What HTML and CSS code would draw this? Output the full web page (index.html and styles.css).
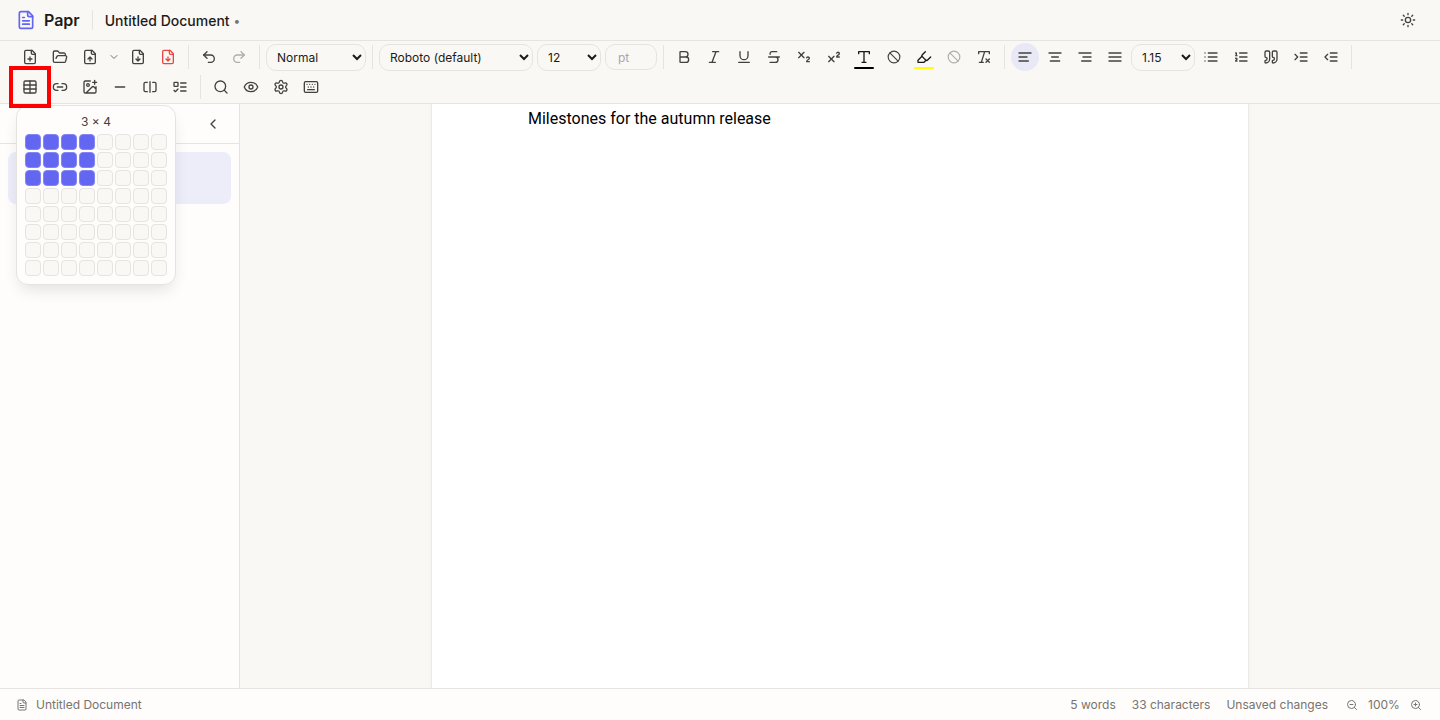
FILE: index.html
```html
<!DOCTYPE html>
<html lang="en">
<head>
<meta charset="utf-8">
<title>Papr</title>
<link rel="stylesheet" href="styles.css">
</head>
<body>
<svg class="sprite" aria-hidden="true">
  <symbol id="file-text" viewBox="0 0 24 24"><path d="M15 2H6a2 2 0 0 0-2 2v16a2 2 0 0 0 2 2h12a2 2 0 0 0 2-2V7Z"/><path d="M14 2v4a2 2 0 0 0 2 2h4M10 9H8M16 13H8M16 17H8"/></symbol>
  <symbol id="file-plus" viewBox="0 0 24 24"><path d="M15 2H6a2 2 0 0 0-2 2v16a2 2 0 0 0 2 2h12a2 2 0 0 0 2-2V7Z"/><path d="M14 2v4a2 2 0 0 0 2 2h4M9 15h6M12 18v-6"/></symbol>
  <symbol id="file-up" viewBox="0 0 24 24"><path d="M15 2H6a2 2 0 0 0-2 2v16a2 2 0 0 0 2 2h12a2 2 0 0 0 2-2V7Z"/><path d="M14 2v4a2 2 0 0 0 2 2h4M12 12v6M15 15l-3-3-3 3"/></symbol>
  <symbol id="file-down" viewBox="0 0 24 24"><path d="M15 2H6a2 2 0 0 0-2 2v16a2 2 0 0 0 2 2h12a2 2 0 0 0 2-2V7Z"/><path d="M14 2v4a2 2 0 0 0 2 2h4M12 18v-6M9 15l3 3 3-3"/></symbol>
  <symbol id="folder-open" viewBox="0 0 24 24"><path d="m6 14 1.5-2.9A2 2 0 0 1 9.24 10H20a2 2 0 0 1 1.94 2.5l-1.54 6a2 2 0 0 1-1.95 1.5H4a2 2 0 0 1-2-2V5a2 2 0 0 1 2-2h3.9a2 2 0 0 1 1.69.9l.81 1.2a2 2 0 0 0 1.67.9H18a2 2 0 0 1 2 2v2"/></symbol>
  <symbol id="chevron-down" viewBox="0 0 24 24"><path d="m6 9 6 6 6-6"/></symbol>
  <symbol id="chevron-left" viewBox="0 0 24 24"><path d="m15 18-6-6 6-6"/></symbol>
  <symbol id="undo" viewBox="0 0 24 24"><path d="M9 14 4 9l5-5"/><path d="M4 9h10.5a5.5 5.5 0 0 1 0 11H11"/></symbol>
  <symbol id="redo" viewBox="0 0 24 24"><path d="m15 14 5-5-5-5"/><path d="M20 9H9.5a5.5 5.5 0 0 0 0 11H13"/></symbol>
  <symbol id="bold" viewBox="0 0 24 24"><path d="M6 12h9a4 4 0 0 1 0 8H7a1 1 0 0 1-1-1V5a1 1 0 0 1 1-1h7a4 4 0 0 1 0 8"/></symbol>
  <symbol id="italic" viewBox="0 0 24 24"><path d="M19 4h-9M14 20H5M15 4 9 20"/></symbol>
  <symbol id="underline" viewBox="0 0 24 24"><path d="M6 4v6a6 6 0 0 0 12 0V4M4 20h16"/></symbol>
  <symbol id="strike" viewBox="0 0 24 24"><path d="M16 4H9a3 3 0 0 0-2.83 4M14 12a4 4 0 0 1 0 8H6M4 12h16"/></symbol>
  <symbol id="subscript" viewBox="0 0 24 24"><path d="m4 5 8 8M12 5l-8 8M20 19h-4c0-1.5.44-2 1.5-2.5S20 15.33 20 14c0-.47-.17-.93-.48-1.29a2.11 2.11 0 0 0-2.62-.44c-.42.24-.74.62-.9 1.07"/></symbol>
  <symbol id="superscript" viewBox="0 0 24 24"><path d="m4 19 8-8M12 19l-8-8M20 12h-4c0-1.5.44-2 1.5-2.5S20 8.33 20 7c0-.47-.17-.93-.48-1.29a2.11 2.11 0 0 0-2.62-.44c-.42.24-.74.62-.9 1.07"/></symbol>
  <symbol id="type" viewBox="0 0 24 24"><path d="M4 7V4h16v3M9 20h6M12 4v16"/></symbol>
  <symbol id="ban" viewBox="0 0 24 24"><circle cx="12" cy="12" r="10"/><path d="m4.9 4.9 14.2 14.2"/></symbol>
  <symbol id="highlighter" viewBox="0 0 24 24"><path d="m9 11-6 6v3h9l3-3"/><path d="m22 12-4.6 4.6a2 2 0 0 1-2.8 0l-5.2-5.2a2 2 0 0 1 0-2.8L14 4"/></symbol>
  <symbol id="clear" viewBox="0 0 24 24"><path d="M4 7V4h16v3M5 20h6M13 4 8 20M15 15l5 5M20 15l-5 5"/></symbol>
  <symbol id="align-left" viewBox="0 0 24 24"><path d="M21 6H3M15 12H3M17 18H3"/></symbol>
  <symbol id="align-center" viewBox="0 0 24 24"><path d="M21 6H3M17 12H7M19 18H5"/></symbol>
  <symbol id="align-right" viewBox="0 0 24 24"><path d="M21 6H3M21 12H9M21 18H7"/></symbol>
  <symbol id="align-justify" viewBox="0 0 24 24"><path d="M3 6h18M3 12h18M3 18h18"/></symbol>
  <symbol id="list" viewBox="0 0 24 24"><path d="M3 6h.01M3 12h.01M3 18h.01M8 6h13M8 12h13M8 18h13"/></symbol>
  <symbol id="list-ordered" viewBox="0 0 24 24"><path d="M10 6h11M10 12h11M10 18h11M4 6h1v4M4 10h2M6 18H4c0-1 2-2 2-3s-1-1.500-2-1"/></symbol>
  <symbol id="quote" viewBox="0 0 24 24"><path d="M16 3a2 2 0 0 0-2 2v6a2 2 0 0 0 2 2 1 1 0 0 1 1 1v1a2 2 0 0 1-2 2 1 1 0 0 0-1 1v2a1 1 0 0 0 1 1 6 6 0 0 0 6-6V5a2 2 0 0 0-2-2z"/><path d="M5 3a2 2 0 0 0-2 2v6a2 2 0 0 0 2 2 1 1 0 0 1 1 1v1a2 2 0 0 1-2 2 1 1 0 0 0-1 1v2a1 1 0 0 0 1 1 6 6 0 0 0 6-6V5a2 2 0 0 0-2-2z"/></symbol>
  <symbol id="indent" viewBox="0 0 24 24"><path d="m3 8 4 4-4 4M21 6H11M21 12H11M21 18H11"/></symbol>
  <symbol id="outdent" viewBox="0 0 24 24"><path d="m7 8-4 4 4 4M21 6H11M21 12H11M21 18H11"/></symbol>
  <symbol id="table" viewBox="0 0 24 24"><rect x="3" y="3" width="18" height="18" rx="2"/><path d="M12 3v18M3 9h18M3 15h18"/></symbol>
  <symbol id="link" viewBox="0 0 24 24"><path d="M9 17H7A5 5 0 0 1 7 7h2M15 7h2a5 5 0 1 1 0 10h-2M8 12h8"/></symbol>
  <symbol id="image-plus" viewBox="0 0 24 24"><path d="M16 5h6M19 2v6M21 11.500V19a2 2 0 0 1-2 2H5a2 2 0 0 1-2-2V5a2 2 0 0 1 2-2h7.500M21 15l-3.090-3.090a2 2 0 0 0-2.820 0L6 21"/><circle cx="9" cy="9" r="2"/></symbol>
  <symbol id="minus" viewBox="0 0 24 24"><path d="M5 12h14"/></symbol>
  <symbol id="split" viewBox="0 0 24 24"><path d="M8 19H5c-1 0-2-1-2-2V7c0-1 1-2 2-2h3M16 5h3c1 0 2 1 2 2v10c0 1-1 2-2 2h-3M12 4v16"/></symbol>
  <symbol id="list-todo" viewBox="0 0 24 24"><rect x="3" y="5" width="6" height="6" rx="1"/><path d="m3 17 2 2 4-4M13 6h8M13 12h8M13 18h8"/></symbol>
  <symbol id="search" viewBox="0 0 24 24"><circle cx="11" cy="11" r="8"/><path d="m21 21-4.300-4.300"/></symbol>
  <symbol id="eye" viewBox="0 0 24 24"><path d="M2.062 12.348a1 1 0 0 1 0-.696 10.750 10.750 0 0 1 19.876 0 1 1 0 0 1 0 .696 10.750 10.750 0 0 1-19.876 0"/><circle cx="12" cy="12" r="3"/></symbol>
  <symbol id="settings" viewBox="0 0 24 24"><path d="M9.671 4.136a2.340 2.340 0 0 1 4.659 0 2.340 2.340 0 0 0 3.319 1.915 2.340 2.340 0 0 1 2.330 4.033 2.340 2.340 0 0 0 0 3.831 2.340 2.340 0 0 1-2.330 4.033 2.340 2.340 0 0 0-3.319 1.915 2.340 2.340 0 0 1-4.659 0 2.340 2.340 0 0 0-3.320-1.915 2.340 2.340 0 0 1-2.330-4.033 2.340 2.340 0 0 0 0-3.831A2.340 2.340 0 0 1 6.350 6.051a2.340 2.340 0 0 0 3.319-1.915"/><circle cx="12" cy="12" r="3"/></symbol>
  <symbol id="keyboard" viewBox="0 0 24 24"><rect x="2" y="4" width="20" height="16" rx="2"/><path d="M6 8h.01M10 8h.01M14 8h.01M18 8h.01M8 12h.01M12 12h.01M16 12h.01M7 16h10"/></symbol>
  <symbol id="sun" viewBox="0 0 24 24"><circle cx="12" cy="12" r="4"/><path d="M12 2v2M12 20v2M4.930 4.930l1.410 1.410M17.660 17.660l1.410 1.410M2 12h2M20 12h2M6.340 17.660l-1.410 1.410M19.070 4.930l-1.410 1.410"/></symbol>
  <symbol id="zoom-out" viewBox="0 0 24 24"><circle cx="11" cy="11" r="8"/><path d="m21 21-4.350-4.350M8 11h6"/></symbol>
  <symbol id="zoom-in" viewBox="0 0 24 24"><circle cx="11" cy="11" r="8"/><path d="m21 21-4.350-4.350M11 8v6M8 11h6"/></symbol>
</svg>

<div class="app">
  <header class="titlebar">
    <svg class="icon logo"><use href="#file-text"/></svg>
    <span class="brand">Papr</span>
    <span class="title-divider"></span>
    <span class="doc-title">Untitled Document</span>
    <span class="dirty">•</span>
    <button class="tool theme" aria-label="Toggle theme"><svg class="icon"><use href="#sun"/></svg></button>
  </header>

  <div class="toolbar" role="toolbar">
    <button class="tool" aria-label="New"><svg class="icon"><use href="#file-plus"/></svg></button>
    <button class="tool" aria-label="Open"><svg class="icon"><use href="#folder-open"/></svg></button>
    <button class="tool" aria-label="Import"><svg class="icon"><use href="#file-up"/></svg></button>
    <button class="tool tool-narrow" aria-label="Import options"><svg class="icon icon-xs"><use href="#chevron-down"/></svg></button>
    <button class="tool" aria-label="Save"><svg class="icon"><use href="#file-down"/></svg></button>
    <button class="tool tool-pdf" aria-label="Export PDF"><svg class="icon"><use href="#file-down"/></svg></button>
    <span class="divider"></span>
    <button class="tool" aria-label="Undo"><svg class="icon"><use href="#undo"/></svg></button>
    <button class="tool" aria-label="Redo" disabled><svg class="icon"><use href="#redo"/></svg></button>
    <span class="divider"></span>
    <select class="field field-style" aria-label="Paragraph style"><option>Normal</option></select>
    <span class="divider"></span>
    <div class="fonts">
      <select class="field field-font" aria-label="Font"><option>Roboto (default)</option></select>
      <select class="field field-number" aria-label="Font size"><option>12</option></select>
      <input class="field field-pt" aria-label="Custom size" placeholder="pt">
    </div>
    <span class="divider"></span>
    <button class="tool" aria-label="Bold"><svg class="icon"><use href="#bold"/></svg></button>
    <button class="tool" aria-label="Italic"><svg class="icon"><use href="#italic"/></svg></button>
    <button class="tool" aria-label="Underline"><svg class="icon"><use href="#underline"/></svg></button>
    <button class="tool" aria-label="Strikethrough"><svg class="icon"><use href="#strike"/></svg></button>
    <button class="tool" aria-label="Subscript"><svg class="icon"><use href="#subscript"/></svg></button>
    <button class="tool" aria-label="Superscript"><svg class="icon"><use href="#superscript"/></svg></button>
    <button class="tool swatch swatch-text" aria-label="Text color"><svg class="icon"><use href="#type"/></svg></button>
    <button class="tool" aria-label="Remove color"><svg class="icon icon-sm"><use href="#ban"/></svg></button>
    <button class="tool swatch swatch-mark" aria-label="Highlight"><svg class="icon"><use href="#highlighter"/></svg></button>
    <button class="tool" aria-label="Remove highlight" disabled><svg class="icon icon-sm"><use href="#ban"/></svg></button>
    <button class="tool" aria-label="Clear formatting"><svg class="icon"><use href="#clear"/></svg></button>
    <span class="divider"></span>
    <button class="tool active" aria-label="Align left"><svg class="icon"><use href="#align-left"/></svg></button>
    <button class="tool" aria-label="Align center"><svg class="icon"><use href="#align-center"/></svg></button>
    <button class="tool" aria-label="Align right"><svg class="icon"><use href="#align-right"/></svg></button>
    <button class="tool" aria-label="Justify"><svg class="icon"><use href="#align-justify"/></svg></button>
    <select class="field field-number" aria-label="Line spacing"><option>1.15</option></select>
    <button class="tool" aria-label="Bullet list"><svg class="icon"><use href="#list"/></svg></button>
    <button class="tool" aria-label="Numbered list"><svg class="icon"><use href="#list-ordered"/></svg></button>
    <button class="tool" aria-label="Quote"><svg class="icon"><use href="#quote"/></svg></button>
    <button class="tool" aria-label="Indent"><svg class="icon"><use href="#indent"/></svg></button>
    <button class="tool" aria-label="Outdent"><svg class="icon"><use href="#outdent"/></svg></button>
    <span class="divider"></span>
    <div class="tool-group">
      <div class="table-tool">
        <button class="tool" aria-label="Insert table" aria-expanded="true"><svg class="icon"><use href="#table"/></svg></button>
        <div class="table-menu">
          <div class="table-size">3 × 4</div>
          <div class="table-grid">
            <i class="on"></i><i class="on"></i><i class="on"></i><i class="on"></i><i></i><i></i><i></i><i></i>
            <i class="on"></i><i class="on"></i><i class="on"></i><i class="on"></i><i></i><i></i><i></i><i></i>
            <i class="on"></i><i class="on"></i><i class="on"></i><i class="on"></i><i></i><i></i><i></i><i></i>
            <i></i><i></i><i></i><i></i><i></i><i></i><i></i><i></i>
            <i></i><i></i><i></i><i></i><i></i><i></i><i></i><i></i>
            <i></i><i></i><i></i><i></i><i></i><i></i><i></i><i></i>
            <i></i><i></i><i></i><i></i><i></i><i></i><i></i><i></i>
            <i></i><i></i><i></i><i></i><i></i><i></i><i></i><i></i>
          </div>
        </div>
        <span class="marker"></span>
      </div>
      <button class="tool" aria-label="Link"><svg class="icon"><use href="#link"/></svg></button>
      <button class="tool" aria-label="Image"><svg class="icon"><use href="#image-plus"/></svg></button>
      <button class="tool" aria-label="Horizontal rule"><svg class="icon"><use href="#minus"/></svg></button>
      <button class="tool" aria-label="Page break"><svg class="icon"><use href="#split"/></svg></button>
      <button class="tool" aria-label="Table of contents"><svg class="icon"><use href="#list-todo"/></svg></button>
    </div>
    <span class="divider"></span>
    <button class="tool" aria-label="Find"><svg class="icon"><use href="#search"/></svg></button>
    <button class="tool" aria-label="Preview"><svg class="icon"><use href="#eye"/></svg></button>
    <button class="tool" aria-label="Settings"><svg class="icon"><use href="#settings"/></svg></button>
    <button class="tool" aria-label="Keyboard shortcuts"><svg class="icon"><use href="#keyboard"/></svg></button>
  </div>

  <div class="workspace">
    <aside class="sidebar">
      <div class="sidebar-head">
        <button class="tool" aria-label="Collapse sidebar"><svg class="icon"><use href="#chevron-left"/></svg></button>
      </div>
      <div class="sidebar-list"><div class="sidebar-item"></div></div>
    </aside>
    <main class="canvas">
      <article class="paper"><p class="line">Milestones for the autumn release</p></article>
    </main>
  </div>

  <footer class="statusbar">
    <svg class="icon icon-xs"><use href="#file-text"/></svg>
    <span class="status-name">Untitled Document</span>
    <div class="status-info">
      <span>5 words</span>
      <span>33 characters</span>
      <span>Unsaved changes</span>
      <div class="zoom">
        <button class="zoom-button" aria-label="Zoom out"><svg class="icon icon-xs"><use href="#zoom-out"/></svg></button>
        <span class="zoom-value">100%</span>
        <button class="zoom-button" aria-label="Zoom in"><svg class="icon icon-xs"><use href="#zoom-in"/></svg></button>
      </div>
    </div>
  </footer>
</div>
</body>
</html>
```
FILE: styles.css
```css
:root {
  --bg: #f9f8f4;
  --surface: #fefdfc;
  --line: #e5e4e1;
  --ink: #1c1b19;
  --icon: #44423d;
  --muted: #78746e;
  --accent: #6366f1;
}
* { box-sizing: border-box; }
body {
  margin: 0;
  font-family: Inter, sans-serif;
  color: var(--ink);
  background: var(--bg);
}
button {
  padding: 0;
  border: 0;
  background: none;
  color: inherit;
  font: inherit;
}
.sprite { display: none; }
.app {
  display: flex;
  flex-direction: column;
  height: 100vh;
  overflow: hidden;
}
.icon {
  flex: none;
  width: 16px;
  height: 16px;
  fill: none;
  stroke: currentColor;
  stroke-width: 2;
  stroke-linecap: round;
  stroke-linejoin: round;
}
.icon-sm { width: 14px; height: 14px; }
.icon-xs { width: 12px; height: 12px; }

/* Title bar */
.titlebar {
  display: flex;
  align-items: center;
  height: 41px;
  padding: 0 18px 0 16px;
  border-bottom: 1px solid var(--line);
}
.logo {
  width: 20px;
  height: 20px;
  color: var(--accent);
}
.brand {
  margin-left: 8px;
  font-size: 16px;
  font-weight: 600;
}
.title-divider {
  width: 1px;
  height: 20px;
  margin: 0 12px;
  background: var(--line);
}
.doc-title {
  font-size: 14px;
  font-weight: 500;
}
.dirty {
  margin-left: 4px;
  font-size: 12px;
  color: var(--muted);
}
.theme { margin-left: auto; }

/* Toolbar */
.toolbar {
  position: relative;
  z-index: 2;
  display: flex;
  flex-wrap: wrap;
  align-items: center;
  gap: 2px;
  padding: 2px 16px;
  border-bottom: 1px solid var(--line);
}
.tool {
  display: flex;
  flex: none;
  align-items: center;
  justify-content: center;
  width: 28px;
  height: 28px;
  border-radius: 14px;
  color: var(--icon);
}
.tool:disabled { opacity: 0.4; }
.tool-narrow { width: 16px; color: var(--muted); }
.tool-pdf { color: #ef4444; }
.tool-group { display: flex; gap: 2px; }
.active { background: #e9e8f6; }
.swatch { position: relative; color: var(--ink); }
.swatch::after {
  content: "";
  position: absolute;
  right: 4px;
  bottom: 2px;
  left: 4px;
  height: 2px;
  border-radius: 1px;
}
.swatch-text::after { background: #000; }
.swatch-mark::after { background: #ff0; }
.divider {
  width: 1px;
  height: 24px;
  margin: 0 4px;
  background: var(--line);
}
.fonts {
  display: flex;
  align-items: center;
  gap: 4px;
}
.field {
  height: 27px;
  padding: 0 6px;
  border: 1px solid var(--line);
  border-radius: 10px;
  background: var(--bg);
  color: var(--ink);
  font-family: Inter, sans-serif;
  font-size: 12px;
}
.field-style { width: 100px; }
.field-font { width: 154px; }
.field-number { width: 64px; }
.field-pt { width: 52px; height: 26px; padding: 0 12px; }
.field-pt::placeholder { color: #a3a8b3; }

/* Table size picker */
.table-tool { position: relative; }
.table-menu {
  position: absolute;
  top: calc(100% + 4px);
  left: 0;
  padding: 8px;
  border: 1px solid var(--line);
  border-radius: 12px;
  background: var(--surface);
  box-shadow: 0 8px 16px -4px rgb(0 0 0 / 12%);
}
.table-size {
  margin-bottom: 4px;
  font-size: 12px;
  line-height: 16px;
  text-align: center;
  color: var(--icon);
}
.table-grid {
  display: grid;
  grid-template-columns: repeat(8, 16px);
  grid-auto-rows: 16px;
  gap: 2px;
}
.table-grid i {
  border: 1px solid var(--line);
  border-radius: 4px;
  background: var(--bg);
}
.table-grid .on {
  border-color: #8285f4;
  background: var(--accent);
}
.marker {
  position: absolute;
  inset: -7px;
  border: 4px solid #f00;
  pointer-events: none;
}

/* Workspace */
.workspace {
  display: flex;
  flex: 1;
  min-height: 0;
}
.sidebar {
  flex: none;
  width: 240px;
  border-right: 1px solid var(--line);
  background: var(--surface);
}
.sidebar-head {
  display: flex;
  align-items: center;
  justify-content: flex-end;
  height: 40px;
  padding: 0 12px;
  border-bottom: 1px solid var(--line);
}
.sidebar-list { padding: 8px; }
.sidebar-item {
  height: 52px;
  border-radius: 8px;
  background: #ededfa;
}
.canvas {
  display: flex;
  flex: 1;
  justify-content: center;
}
.paper {
  width: 818px;
  padding: 3px 96px;
  border: solid #eceae7;
  border-width: 0 1px;
  background: #fff;
  box-shadow: 0 0 3px rgb(0 0 0 / 4%);
}
.line {
  margin: 0;
  color: #000;
  font-family: Roboto, sans-serif;
  font-size: 16px;
  line-height: 24px;
}

/* Status bar */
.statusbar {
  position: relative;
  z-index: 1;
  display: flex;
  align-items: center;
  height: 32px;
  padding: 0 16px;
  border-top: 1px solid var(--line);
  background: var(--surface);
  color: var(--muted);
  font-size: 12px;
}
.status-name { margin-left: 8px; }
.status-info {
  display: flex;
  align-items: center;
  gap: 16px;
  margin-left: auto;
}
.zoom {
  display: flex;
  align-items: center;
  gap: 4px;
}
.zoom-button {
  display: flex;
  align-items: center;
  justify-content: center;
  width: 16px;
  height: 16px;
}
.zoom-value {
  width: 40px;
  text-align: center;
}
```
